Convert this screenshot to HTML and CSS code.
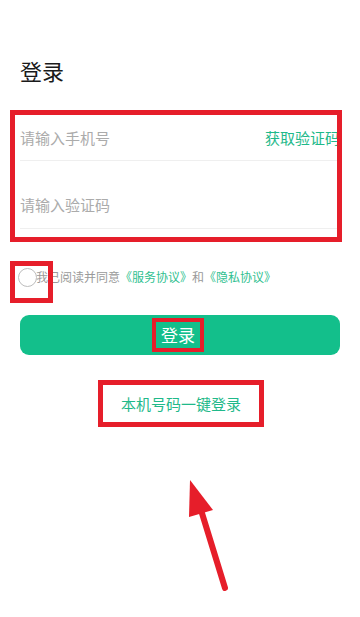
FILE: index.html
```html
<!DOCTYPE html>
<html lang="zh-CN">
<head>
<meta charset="utf-8">
<meta name="viewport" content="width=360">
<title>登录</title>
<link rel="stylesheet" href="styles.css">
</head>
<body>
<div class="page">
  <h1 class="title">登录</h1>

  <div class="form">
    <div class="row row-phone">
      <span class="placeholder">请输入手机号</span>
      <span class="getcode">获取验证码</span>
    </div>
    <div class="row row-code">
      <span class="placeholder">请输入验证码</span>
    </div>
  </div>

  <div class="agree">
    <span class="check"><span class="circle"></span></span>
    <span class="agree-text">我已阅读并同意<span class="link">《服务协议》</span>和<span class="link">《隐私协议》</span></span>
  </div>

  <div class="btn"><span class="btn-label">登录</span></div>

  <div class="onekey"><span>本机号码一键登录</span></div>

  <svg class="arrow" width="360" height="617" viewBox="0 0 360 617">
    <line x1="201" y1="510" x2="225" y2="588" stroke="#e61e2a" stroke-width="6" stroke-linecap="round"/>
    <polygon points="190,480 189,517 213,510" fill="#e61e2a"/>
  </svg>
</div>
</body>
</html>
```

FILE: styles.css
```css
* { box-sizing: border-box; }
html, body { margin: 0; padding: 0; background: #fff; }
body {
  font-family: "Noto Sans CJK SC", "Noto Sans", sans-serif;
  color: #222;
}
.page {
  position: relative;
  width: 360px;
  height: 617px;
  overflow: hidden;
}
.title {
  margin: 56px 0 0 20px;
  font-size: 22px;
  line-height: 28px;
  font-weight: 400;
  color: #1a1a1a;
}
.form {
  position: relative;
  margin: 26px 0 0 10px;
  width: 332px;
  padding: 5px 5px 13px 10px;
}
.form::after {
  content: "";
  position: absolute;
  inset: 0;
  border: 5px solid #e61e2a;
}
.row {
  display: flex;
  align-items: center;
  justify-content: space-between;
  border-bottom: 1px solid #efefef;
  font-size: 15px;
  line-height: 20px;
}
.row-phone { height: 46px; }
.row-code {
  height: 68px;
  align-items: flex-end;
  padding-bottom: 13px;
}
.placeholder { color: #ababab; }
.getcode {
  color: #1fb98a;
  margin-right: -3px;
}
.agree {
  display: flex;
  align-items: center;
  height: 32px;
  margin-top: 19px;
  font-size: 12px;
  line-height: 16px;
}
.check {
  position: relative;
  flex: 0 0 36px;
  width: 36px;
  height: 32px;
  display: flex;
  align-items: center;
  padding-left: 18px;
}
.circle {
  flex: 0 0 19px;
  width: 19px;
  height: 19px;
  border-radius: 50%;
  border: 1px solid #bdbdbd;
  margin-right: -1px;
}
.check::after {
  content: "";
  position: absolute;
  left: 10px;
  top: 0;
  width: 33px;
  height: 32px;
  border: 5px solid #e61e2a;
  z-index: 2;
}
.agree-text {
  color: #9a9a9a;
}
.link { color: #2fbf90; }
.btn {
  margin: 22px 20px 0 20px;
  height: 40px;
  border-radius: 9px;
  background: #13bf8b;
  display: flex;
  align-items: center;
  justify-content: center;
}
.btn-label {
  position: relative;
  color: #fff;
  font-size: 17px;
  line-height: 24px;
  padding: 0 3px;
  margin-left: -4px;
}
.btn-label::after {
  content: "";
  position: absolute;
  left: -6px;
  right: -6px;
  top: -5px;
  bottom: -5px;
  border: 4px solid #e61e2a;
}
.onekey {
  position: relative;
  margin: 25px 0 0 98px;
  width: 166px;
  height: 47px;
  display: flex;
  align-items: center;
  justify-content: center;
  color: #1fb98a;
  font-size: 15px;
  line-height: 20px;
}
.onekey::after {
  content: "";
  position: absolute;
  inset: 0;
  border: 5px solid #e61e2a;
}
.arrow {
  position: absolute;
  left: 0;
  top: 0;
  pointer-events: none;
}
```
